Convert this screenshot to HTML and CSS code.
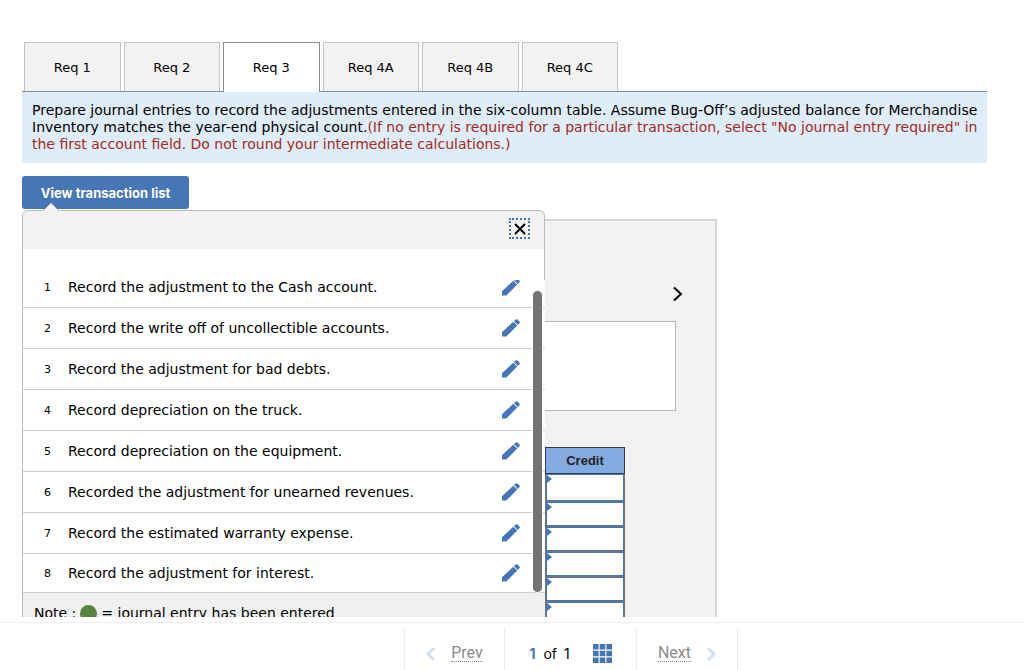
FILE: index.html
```
<!DOCTYPE html>
<html lang="en">
<head>
  <meta charset="UTF-8">
  <meta name="viewport" content="width=device-width, initial-scale=1.0">
  <title>Req 3 - Journal entries</title>
  <link rel="stylesheet" href="styles.css">
</head>
<body>
  <!-- shared icons -->
  <svg class="sprite" width="0" height="0" aria-hidden="true">
    <symbol id="pencil" viewBox="0 0 18 18">
      <path d="M0 13.2L11.2 2.8L15.2 6.6L4.3 17.6H0Z"/>
      <path d="M11.9 2.1L13.7 0.5Q14.6 -0.1 15.4 0.6L17.5 2.6Q18.2 3.4 17.5 4.2L15.8 6Z"/>
    </symbol>
  </svg>

  <main class="content">
    <nav class="tabs">
      <button class="tab">Req 1</button>
      <button class="tab">Req 2</button>
      <button class="tab active">Req 3</button>
      <button class="tab">Req 4A</button>
      <button class="tab">Req 4B</button>
      <button class="tab">Req 4C</button>
    </nav>

    <p class="instructions">Prepare journal entries to record the adjustments entered in the six-column table. Assume Bug-Off’s adjusted balance for Merchandise Inventory matches the year-end physical count.<span class="hint">(If no entry is required for a particular transaction, select "No journal entry required" in the first account field. Do not round your intermediate calculations.)</span></p>

    <div class="worksheet">
      <button class="view-btn">View transaction list</button>

      <section class="entry-panel">
        <button class="next-entry" aria-label="Next entry">
          <svg width="12" height="16" viewBox="0 0 12 16"><path d="M2 1.5L9 8L2 14.5"/></svg>
        </button>
        <div class="entry-text"></div>
        <table class="journal">
          <thead>
            <tr><th>Credit</th></tr>
          </thead>
          <tbody>
            <tr><td><input type="text" aria-label="Credit 1"></td></tr>
            <tr><td><input type="text" aria-label="Credit 2"></td></tr>
            <tr><td><input type="text" aria-label="Credit 3"></td></tr>
            <tr><td><input type="text" aria-label="Credit 4"></td></tr>
            <tr><td><input type="text" aria-label="Credit 5"></td></tr>
            <tr><td><input type="text" aria-label="Credit 6"></td></tr>
          </tbody>
        </table>
      </section>

      <!-- transaction list popup -->
      <section class="popup">
        <svg class="popup-arrow" width="16" height="9" viewBox="0 0 16 9"><path d="M0 9L8 1L16 9"/></svg>
        <header class="popup-head">
          <button class="close" aria-label="Close">
            <svg width="14" height="14" viewBox="0 0 14 14"><path d="M2 2L12 12M12 2L2 12"/></svg>
          </button>
        </header>
        <div class="popup-body">
          <ol class="transactions">
            <li><span class="num">1</span><span class="label">Record the adjustment to the Cash account.</span><button class="edit" aria-label="Edit 1"><svg width="18" height="18"><use href="#pencil"/></svg></button></li>
            <li><span class="num">2</span><span class="label">Record the write off of uncollectible accounts.</span><button class="edit" aria-label="Edit 2"><svg width="18" height="18"><use href="#pencil"/></svg></button></li>
            <li><span class="num">3</span><span class="label">Record the adjustment for bad debts.</span><button class="edit" aria-label="Edit 3"><svg width="18" height="18"><use href="#pencil"/></svg></button></li>
            <li><span class="num">4</span><span class="label">Record depreciation on the truck.</span><button class="edit" aria-label="Edit 4"><svg width="18" height="18"><use href="#pencil"/></svg></button></li>
            <li><span class="num">5</span><span class="label">Record depreciation on the equipment.</span><button class="edit" aria-label="Edit 5"><svg width="18" height="18"><use href="#pencil"/></svg></button></li>
            <li><span class="num">6</span><span class="label">Recorded the adjustment for unearned revenues.</span><button class="edit" aria-label="Edit 6"><svg width="18" height="18"><use href="#pencil"/></svg></button></li>
            <li><span class="num">7</span><span class="label">Record the estimated warranty expense.</span><button class="edit" aria-label="Edit 7"><svg width="18" height="18"><use href="#pencil"/></svg></button></li>
            <li><span class="num">8</span><span class="label">Record the adjustment for interest.</span><button class="edit" aria-label="Edit 8"><svg width="18" height="18"><use href="#pencil"/></svg></button></li>
          </ol>
          <div class="scroll-thumb"></div>
        </div>
        <div class="note">Note : <span class="dot"></span> = journal entry has been entered</div>
      </section>
    </div>
  </main>

  <footer class="pager">
    <div class="pager-cell prev">
      <svg class="chev" width="10" height="16" viewBox="0 0 10 16"><path d="M8 2L2 8L8 14"/></svg>
      <a href="#">Prev</a>
    </div>
    <div class="pager-cell count">
      <span><b>1</b> of <span class="total">1</span></span>
      <svg class="grid-icon" width="19" height="19" viewBox="0 0 19 19">
        <path d="M0 0h5.6v5.6H0zM6.7 0h5.6v5.6H6.7zM13.4 0H19v5.6h-5.6zM0 6.7h5.6v5.6H0zM6.7 6.7h5.6v5.6H6.7zM13.4 6.7H19v5.6h-5.6zM0 13.4h5.6V19H0zM6.7 13.4h5.6V19H6.7zM13.4 13.4H19V19h-5.6z"/>
      </svg>
    </div>
    <div class="pager-cell next">
      <a href="#">Next</a>
      <svg class="chev" width="10" height="16" viewBox="0 0 10 16"><path d="M2 2L8 8L2 14"/></svg>
    </div>
  </footer>
</body>
</html>
```
FILE: styles.css
```
* {
  margin: 0;
  padding: 0;
  box-sizing: border-box;
}

body {
  height: 100vh;
  display: flex;
  flex-direction: column;
  overflow: hidden;
  background: #fff;
  color: #000;
  font-family: Verdana, "DejaVu Sans", sans-serif;
  font-size: 14px;
}

button {
  font: inherit;
  color: inherit;
  background: none;
  border: none;
  cursor: pointer;
}

.sprite {
  position: absolute;
}

.content {
  flex: 1;
  min-height: 0;
  overflow: hidden;
  padding: 42px 37px 0 22px;
}

/* Tabs */
.tabs {
  display: grid;
  grid-template-columns: repeat(6, 1fr);
  gap: 3px;
  max-width: 596px;
  padding-left: 2px;
}

.tab {
  height: 49px;
  background: #f2f2f2;
  border: 1px solid #c4c4c4;
  border-bottom: none;
  font-size: 13px;
}

.tab.active {
  height: 50px;
  margin-bottom: -1px;
  background: #fff;
  border-color: #8c8c8c;
  position: relative;
}

.instructions {
  background: #dfecf9;
  border-top: 1px solid #8c8c8c;
  padding: 10px 4px 10px 10px;
  line-height: 17px;
}

.hint {
  color: #a52a22;
}

/* Worksheet */
.worksheet {
  position: relative;
  margin-top: 13px;
}

.view-btn {
  display: block;
  width: 167px;
  height: 33px;
  border-radius: 3px;
  background: #4676b6;
  color: #fff;
  font-family: Inter, sans-serif;
  font-size: 13px;
  font-weight: 700;
}

.entry-panel {
  max-width: 695px;
  height: 500px;
  margin-top: 10px;
  padding: 58px 39px 0;
  background: #f2f2f2;
  border: 2px solid #d6d6d6;
}

.next-entry {
  display: block;
  width: 12px;
  height: 32px;
  margin-left: auto;
  margin-right: -8px;
}

.next-entry path {
  fill: none;
  stroke: #000;
  stroke-width: 2;
}

.entry-text {
  height: 90px;
  margin-top: 10px;
  background: #fff;
  border: 1px solid #b5b5b5;
}

.journal {
  width: 80px;
  margin: 36px 51px 0 auto;
  border-collapse: collapse;
}

.journal th {
  height: 26px;
  background: #84abe0;
  border: 1px solid #333a48;
  color: #222;
  font: bold 13px "Liberation Sans", Arial, sans-serif;
}

.journal td {
  position: relative;
  height: 25px;
  border: 1px solid #77736f;
}

.journal tbody tr:first-child td {
  height: 28px;
}

.journal td::before {
  content: "";
  position: absolute;
  top: 1px;
  left: 1px;
  border: 4px solid transparent;
  border-left: 5px solid #4676b6;
  border-right: none;
}

.journal input {
  display: block;
  width: 100%;
  height: 24px;
  border: 1px solid #4676b6;
  background: #fff;
}

.journal tbody tr:first-child input {
  height: 27px;
}

/* Transaction list popup */
.popup {
  position: absolute;
  top: 34px;
  left: 0;
  width: 523px;
  background: #fff;
  border-left: 1px solid #bbb;
  border-radius: 6px 6px 0 0;
}

.popup-arrow {
  position: absolute;
  top: -8px;
  left: 20px;
  fill: #f2f2f2;
  stroke: #bbb;
}

.popup-head {
  display: flex;
  justify-content: flex-end;
  height: 70px;
  padding: 7px 14px 0 0;
  background: linear-gradient(#f2f2f2 38px, #fff 38px);
  border: 1px solid #bbb;
  border-left: none;
  border-bottom: none;
  border-radius: 5px 6px 0 0;
}

.close {
  display: flex;
  align-items: center;
  justify-content: center;
  width: 21px;
  height: 21px;
  border: 2px dotted #4676b6;
}

.close path {
  stroke: #000;
  stroke-width: 2;
}

.popup-body {
  position: relative;
  overflow: hidden;
}

.transactions {
  list-style: none;
  margin-top: -13px;
}

.transactions li {
  display: flex;
  align-items: center;
  height: 41px;
  padding: 0 25px 0 21px;
  border-bottom: 1px solid #ccc;
}

.transactions li:last-child {
  height: 39px;
}

.num {
  width: 24px;
  font-size: 11px;
}

.label {
  flex: 1;
}

.edit {
  height: 18px;
}

.edit svg {
  display: block;
  fill: #4676b6;
}

.scroll-thumb {
  position: absolute;
  top: 10px;
  right: 2px;
  bottom: 0;
  width: 11px;
  background: #747272;
  border: 1px solid #fff;
  border-radius: 6px;
}

.note {
  display: flex;
  align-items: center;
  gap: 4px;
  height: 60px;
  padding: 0 11px 20px;
  background: #f0f0f0;
}

.dot {
  width: 17px;
  height: 17px;
  border-radius: 50%;
  background: #57853f;
}

/* Pager */
.pager {
  display: flex;
  height: 48px;
  margin-top: 5px;
  padding: 5px 0 0 404px;
  border-top: 1px solid #eee;
  font-family: Inter, sans-serif;
}

.pager-cell {
  display: flex;
  align-items: center;
  justify-content: center;
  padding-top: 9px;
  border-left: 1px solid #ececec;
}

.prev {
  width: 100px;
  gap: 15px;
}

.count {
  width: 132px;
  gap: 23px;
}

.next {
  width: 102px;
  gap: 15px;
  border-right: 1px solid #ececec;
}

.pager a {
  color: #8c8c8c;
  font-size: 16px;
  font-family: Roboto, sans-serif;
  line-height: 16px;
  text-decoration: none;
  border-bottom: 1px dotted #8c8c8c;
}

.pager b {
  color: #4676b6;
  margin-right: 4px;
}

.total {
  margin-left: 3px;
}

.chev {
  fill: none;
  stroke: #d3e0f0;
  stroke-width: 3;
}

.grid-icon {
  fill: #4676b6;
}
```
